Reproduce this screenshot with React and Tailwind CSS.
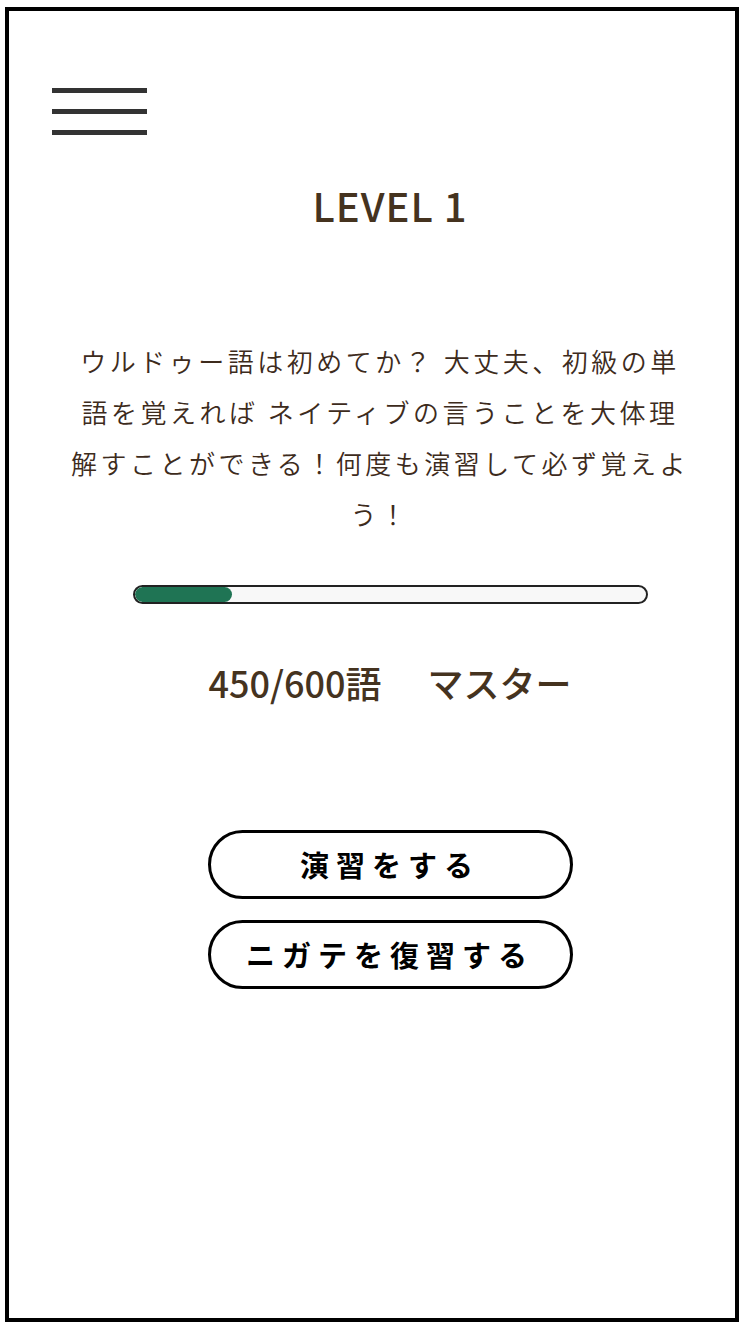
export default function App() {
  const font = { fontFamily: '"Noto Sans CJK JP", "Noto Sans", sans-serif' };
  return (
    <div className="w-[750px] h-[1334px] bg-white pt-[7px] pl-[5px]" style={font}>
      <div className="w-[734px] h-[1315px] border-[4px] border-black flex flex-col">
        <div className="mt-[77px] ml-[43px] w-[95px] flex flex-col gap-[16px]">
          <div className="h-[5px] bg-[#333333]" />
          <div className="h-[5px] bg-[#333333]" />
          <div className="h-[5px] bg-[#333333]" />
        </div>
        <div className="flex flex-col items-center pl-[36px]">
          <h1 className="mt-[40px] text-[40px] leading-[60px] font-medium tracking-[1px] text-[#45331f]">LEVEL 1</h1>
          <p className="mt-[100px] -ml-[20px] w-[660px] whitespace-nowrap text-center text-[26px] leading-[51px] tracking-[3.5px] font-[350] text-[#3d2b1c]">
            ウルドゥー語は初めてか？ 大丈夫、初級の単<br />
            語を覚えれば ネイティブの言うことを大体理<br />
            解すことができる！何度も演習して必ず覚えよ<br />
            う！
          </p>
          <div className="mt-[46px] w-[515px] h-[19px] rounded-full border-[2px] border-[#222222] bg-[#f8f8f8] overflow-hidden">
            <div className="h-full bg-[#1f7454] rounded-full" style={{ width: "19%" }} />
          </div>
          <div className="mt-[54px] text-[36px] leading-[48px] font-medium text-[#45331f]">
            450/600語<span className="ml-[46px]">マスター</span>
          </div>
          <button className="mt-[124px] w-[365px] h-[69px] rounded-full border-[3px] border-black bg-white text-[29px] font-bold text-black tracking-[7px] flex items-center justify-center">
            演習をする
          </button>
          <button className="mt-[21px] w-[365px] h-[69px] rounded-full border-[3px] border-black bg-white text-[29px] font-bold text-black tracking-[7px] flex items-center justify-center">
            ニガテを復習する
          </button>
        </div>
      </div>
    </div>
  );
}
